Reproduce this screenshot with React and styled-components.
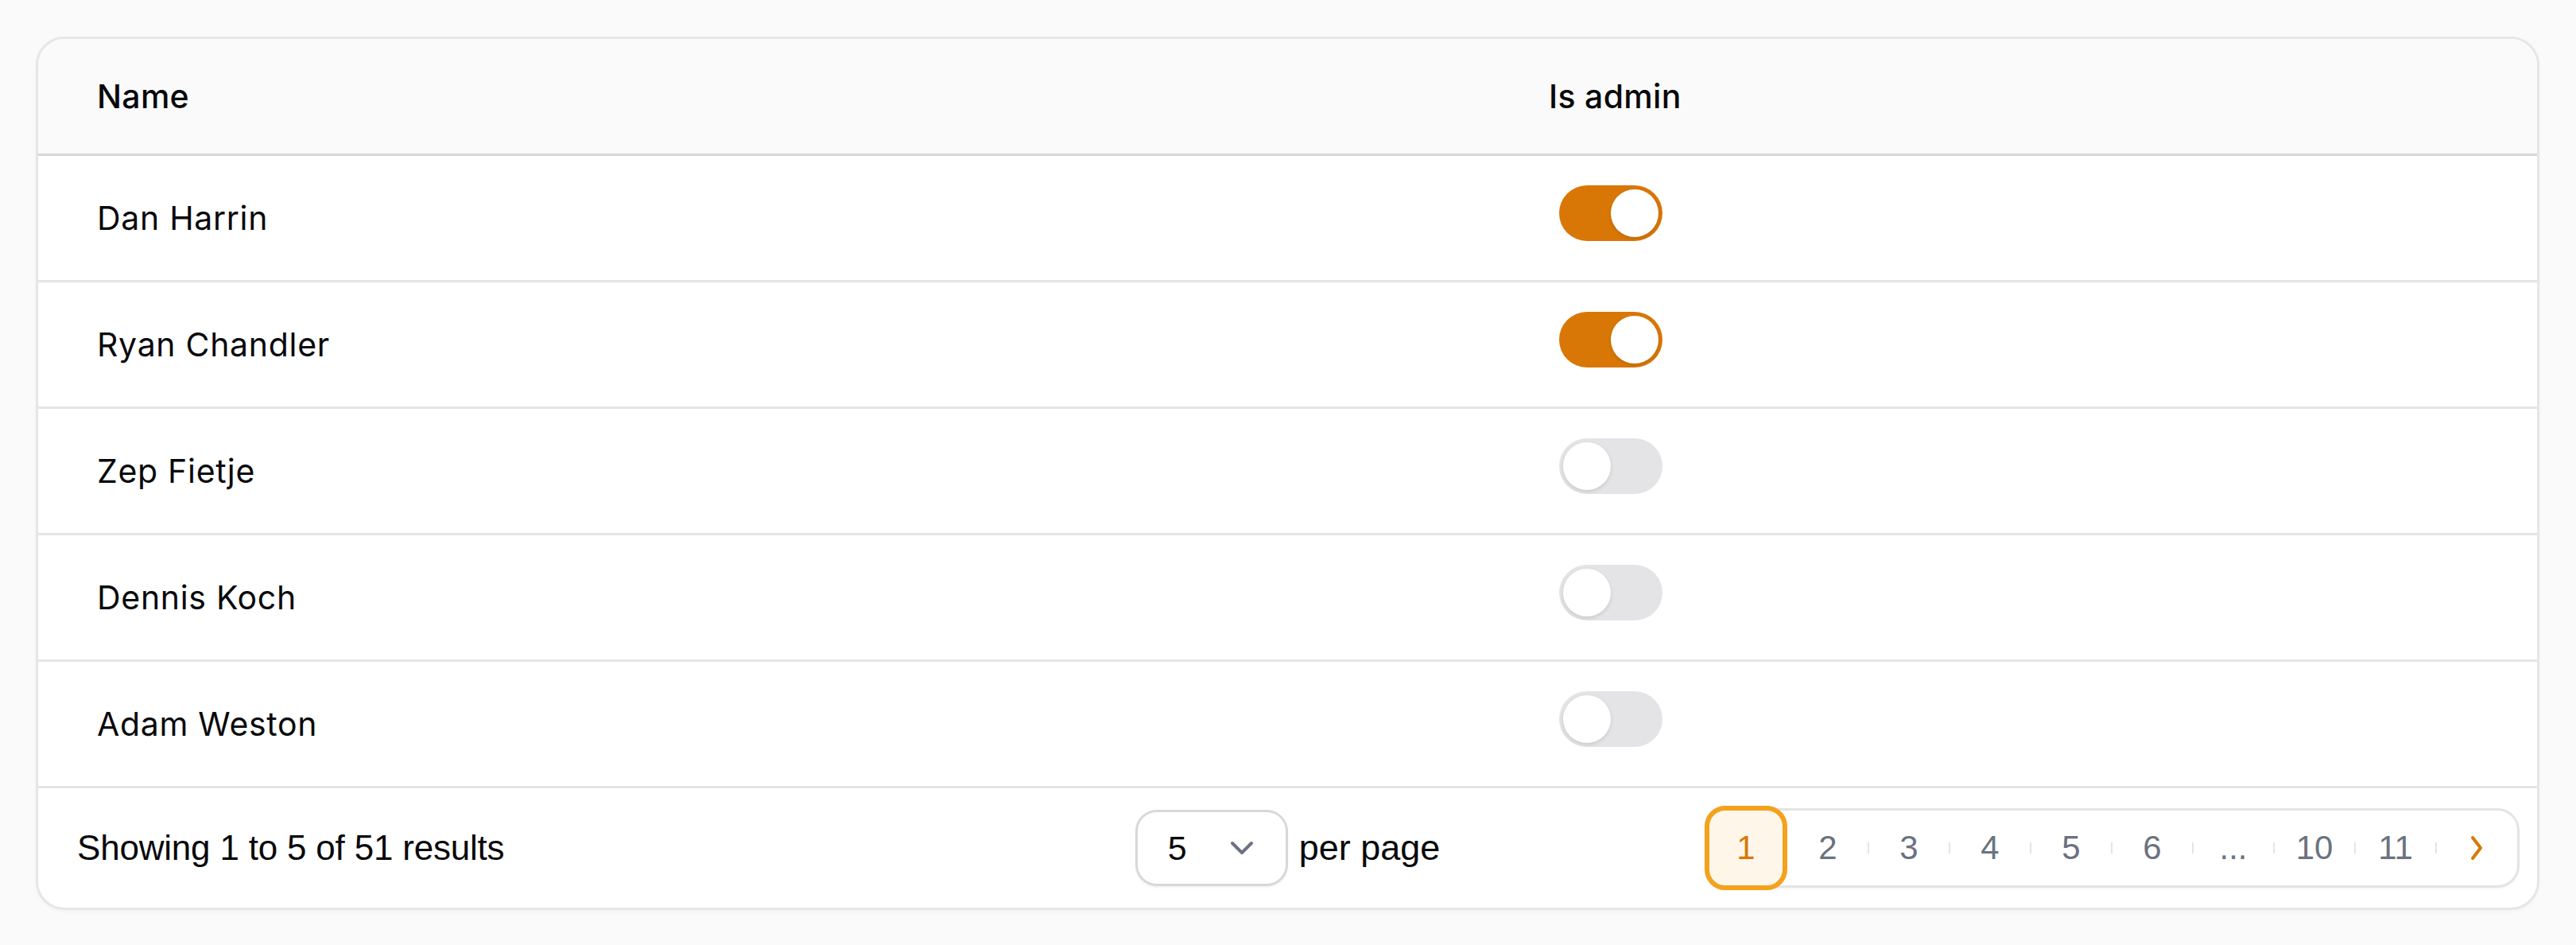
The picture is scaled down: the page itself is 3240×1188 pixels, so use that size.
import React from "react";
import styled, { createGlobalStyle } from "styled-components";

const GlobalStyle = createGlobalStyle`
  html, body {
    margin: 0;
    padding: 0;
    background: #fafafa;
  }
  * {
    box-sizing: border-box;
  }
`;

const Page = styled.div`
  padding: 46px 46px 48px 45px;
  font-family: Inter, "Noto Sans", sans-serif;
  color: #09090b;
`;

const Card = styled.div`
  background: #ffffff;
  border: 3px solid #e6e6e6;
  border-radius: 36px;
  overflow: hidden;
  box-shadow: 0 2px 4px rgba(0, 0, 0, 0.03);
`;

const Row = styled.div`
  display: grid;
  grid-template-columns: 1826px 1fr;
  align-items: center;
  height: ${(p) => (p.$head ? "147px" : "159px")};
  background: ${(p) => (p.$head ? "#fafafa" : "#ffffff")};
  border-bottom: 3px solid ${(p) => (p.$head ? "#d6d6d9" : "#e5e5e7")};
`;

const Cell = styled.div`
  padding-left: 74px;
  font-size: 41px;
  font-weight: ${(p) => (p.$head ? 500 : 400)};
  letter-spacing: ${(p) => (p.$head ? "0.3px" : "0.7px")};
`;

const ToggleCell = styled.div`
  padding-left: 87px;
  display: flex;
  align-items: center;
  margin-top: -12px;
`;

const Toggle = styled.span`
  position: relative;
  display: inline-block;
  width: 130px;
  height: 70px;
  border-radius: 35px;
  background: ${(p) => (p.$on ? "#d97706" : "#e4e4e7")};

  &::after {
    content: "";
    position: absolute;
    top: 5px;
    left: ${(p) => (p.$on ? "65px" : "5px")};
    width: 60px;
    height: 60px;
    border-radius: 50%;
    background: #ffffff;
    box-shadow: 0 2px 5px rgba(0, 0, 0, 0.12);
  }
`;

const Footer = styled.div`
  display: grid;
  grid-template-columns: 1fr auto 1fr;
  align-items: center;
  height: 150px;
  padding: 0 22px;
  font-family: "Liberation Sans", Arial, sans-serif;
  font-size: 44px;
  color: #09090b;
`;

const Summary = styled.div`
  padding-left: 27px;
  letter-spacing: -0.2px;
`;

const PerPage = styled.div`
  display: flex;
  align-items: center;
  gap: 14px;
  font-size: 45px;
`;

const Select = styled.div`
  display: flex;
  align-items: center;
  justify-content: space-between;
  width: 192px;
  height: 96px;
  padding: 0 40px 0 38px;
  border: 3px solid #d8d8db;
  border-radius: 27px;
  background: #ffffff;
  box-shadow: 0 2px 3px rgba(0, 0, 0, 0.05);
  font-size: 43px;
`;

const Pager = styled.nav`
  justify-self: end;
  display: flex;
  align-items: center;
  height: 100px;
  border: 3px solid #e4e4e7;
  border-radius: 28px;
  background: #ffffff;
  box-shadow: 0 2px 3px rgba(0, 0, 0, 0.04);
`;

const PageItem = styled.span`
  position: relative;
  display: flex;
  align-items: center;
  justify-content: center;
  width: 102px;
  height: 94px;
  font-size: 42px;
  color: #6b7280;

  &::before {
    content: "";
    display: ${(p) => (p.$sep ? "block" : "none")};
    position: absolute;
    left: -1px;
    top: 40px;
    width: 2px;
    height: 14px;
    background: #e4e4e7;
  }
`;

const ActiveItem = styled.span`
  display: flex;
  align-items: center;
  justify-content: center;
  width: 104px;
  height: 106px;
  margin: -6px 0 -6px -3px;
  border: 6px solid #f4a11c;
  border-radius: 26px;
  background: #fff6ea;
  font-size: 42px;
  color: #d97706;
`;

const users = [
  { name: "Dan Harrin", admin: true },
  { name: "Ryan Chandler", admin: true },
  { name: "Zep Fietje", admin: false },
  { name: "Dennis Koch", admin: false },
  { name: "Adam Weston", admin: false },
];

const pages = ["2", "3", "4", "5", "6", "...", "10", "11"];

export default function App() {
  return (
    <>
      <GlobalStyle />
      <Page>
        <Card>
          <Row $head>
            <Cell $head>Name</Cell>
            <Cell $head>Is admin</Cell>
          </Row>
          {users.map((u) => (
            <Row key={u.name}>
              <Cell>{u.name}</Cell>
              <ToggleCell>
                <Toggle $on={u.admin} />
              </ToggleCell>
            </Row>
          ))}
          <Footer>
            <Summary>Showing 1 to 5 of 51 results</Summary>
            <PerPage>
              <Select>
                <span>5</span>
                <svg width="30" height="18" viewBox="0 0 30 18" fill="none">
                  <path d="M3 3l12 12 12-12" stroke="#6b7280" strokeWidth="4" strokeLinecap="round" strokeLinejoin="round" />
                </svg>
              </Select>
              <span>per page</span>
            </PerPage>
            <Pager>
              <ActiveItem>1</ActiveItem>
              {pages.map((p, i) => (
                <PageItem key={p} $sep={i > 0}>
                  {p}
                </PageItem>
              ))}
              <PageItem $sep>
                <svg width="18" height="32" viewBox="0 0 18 32" fill="none">
                  <path d="M4 3l10 13-10 13" stroke="#d97706" strokeWidth="4" strokeLinecap="round" strokeLinejoin="round" />
                </svg>
              </PageItem>
            </Pager>
          </Footer>
        </Card>
      </Page>
    </>
  );
}
